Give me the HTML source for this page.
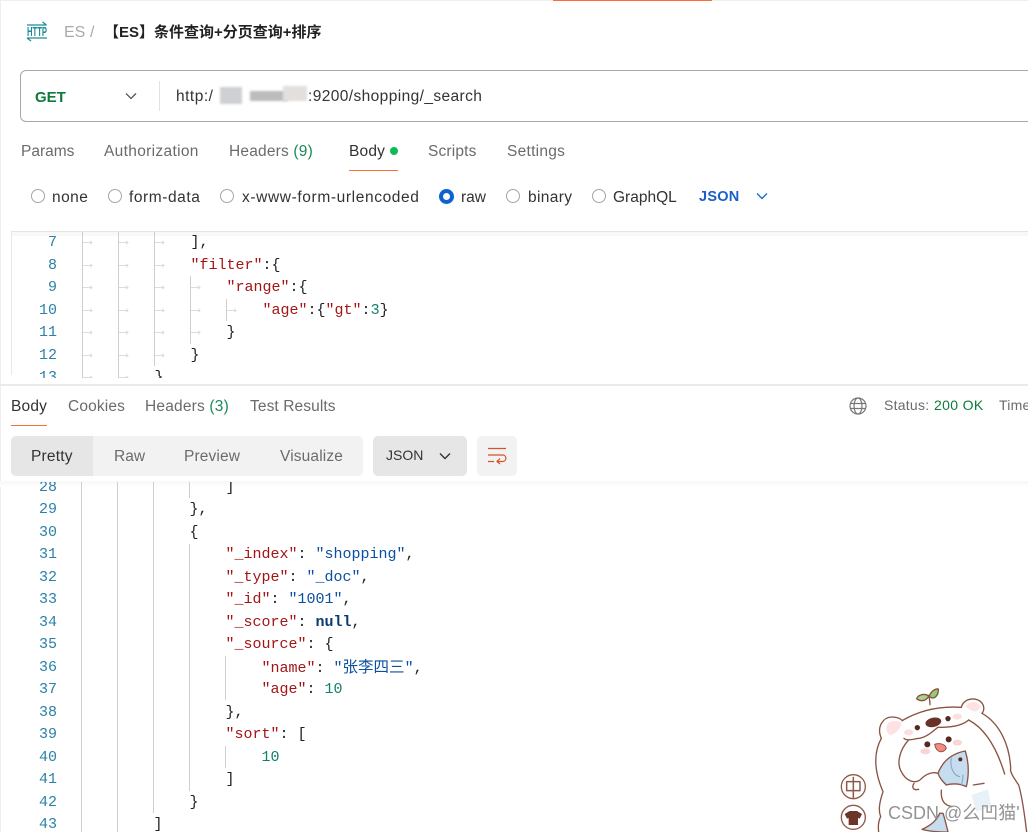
<!DOCTYPE html>
<html lang="zh">
<head>
<meta charset="utf-8">
<style>
html,body{margin:0;padding:0;background:#fff;}
body{width:1028px;height:832px;position:relative;overflow:hidden;font-family:"Liberation Sans","Noto Sans CJK SC",sans-serif;}
.t{position:absolute;white-space:pre;line-height:20px;font-size:15.5px;color:#6b6b6b;}
.r{position:absolute;width:12px;height:12px;border:1.5px solid #a6a6a6;border-radius:50%;top:189px;}
.rl{top:188px;color:#333;}
.n{position:absolute;left:20px;width:37px;text-align:right;font:15px/20px "Liberation Mono",monospace;color:#2a82a8;}
.c{position:absolute;margin-left:.5px;font:15px/20px "Liberation Mono","Noto Sans CJK SC",monospace;white-space:pre;color:#222;}
.up .n,.up .c{transform:translateY(1px);}
.k{color:#a31515}.s{color:#0b4f9e}.v{color:#14806a}.b{color:#0b3a70;font-weight:bold}
.g{position:absolute;width:1px;background:#cfcfcf;}
.a{position:absolute;width:9px;height:1px;background:#dcdcdc;}
.a:after{content:"";position:absolute;right:0;top:-1px;width:2px;height:2px;border-top:1px solid #dcdcdc;border-right:1px solid #dcdcdc;transform:rotate(45deg);}
.bx{position:absolute;}
</style>
</head>
<body>
<div class="bx" style="left:0;top:0;width:1028px;height:1px;background:#efefef"></div>
<div class="bx" style="left:553px;top:0;width:159px;height:1px;background:#ff6c37"></div>
<div class="bx" style="left:0;top:0;width:1px;height:832px;background:#eee"></div>

<svg class="bx" style="left:26px;top:20px" width="22" height="22" viewBox="0 0 22 22" fill="none" stroke="#1d8a9a" stroke-width="1.2">
<path d="M1 5H20.5M16.5 2L20.5 5"/><path d="M1 18H21M5 21L1 18"/>
<text x="1" y="16" font-family="Liberation Sans" font-size="12.5" font-weight="bold" fill="#1d8a9a" stroke="none" textLength="20" lengthAdjust="spacingAndGlyphs">HTTP</text>
</svg>
<div class="t" style="left:64px;top:23px;color:#aaa;font-size:16px">ES</div>
<div class="t" style="left:90px;top:23px;color:#aaa;font-size:16px">/</div>
<div class="t" style="left:104px;top:23px;color:#222;font-weight:bold;font-size:15px">【ES】条件查询+分页查询+排序</div>

<div class="bx" style="left:20px;top:70px;width:1020px;height:50px;border:1px solid #a8a8a8;border-radius:6px"></div>
<div class="t" style="left:35px;top:88px;color:#0f7a3c;font-weight:bold;font-size:15px">GET</div>
<svg class="bx" style="left:124px;top:92px" width="14" height="9" viewBox="0 0 14 9" fill="none" stroke="#555" stroke-width="1.3"><path d="M2 1.5L7 6.5L12 1.5"/></svg>
<div class="bx" style="left:159px;top:81px;width:1px;height:30px;background:#e2e2e2"></div>
<div class="t" style="left:176px;top:87px;color:#333;letter-spacing:.5px">http:/</div>
<div class="bx" style="left:220px;top:87px;width:22px;height:17px;background:#cfd0d3;filter:blur(1px)"></div>
<div class="bx" style="left:250px;top:91px;width:38px;height:10px;background:#bdbcbc;filter:blur(1px)"></div>
<div class="bx" style="left:283px;top:86px;width:24px;height:15px;background:#e2dfdc;filter:blur(1px)"></div>
<div class="t" style="left:308px;top:87px;color:#333;letter-spacing:.4px">:9200/shopping/_search</div>

<div class="t" style="left:21px;top:142px">Params</div>
<div class="t" style="left:104px;top:142px;letter-spacing:.33px">Authorization</div>
<div class="t" style="left:229px;top:142px;letter-spacing:.19px">Headers <span style="color:#1a8a5a">(9)</span></div>
<div class="t" style="left:349px;top:142px;color:#333;letter-spacing:.2px">Body</div>
<div class="bx" style="left:390px;top:147px;width:8px;height:8px;border-radius:50%;background:#0cbb52"></div>
<div class="bx" style="left:349px;top:170px;width:49px;height:1px;background:#ff6c37"></div>
<div class="t" style="left:428px;top:142px;letter-spacing:.17px">Scripts</div>
<div class="t" style="left:507px;top:142px;letter-spacing:.27px">Settings</div>

<div class="r" style="left:31px"></div><div class="t rl" style="left:52px;letter-spacing:.45px">none</div>
<div class="r" style="left:108px"></div><div class="t rl" style="left:129px;letter-spacing:.56px">form-data</div>
<div class="r" style="left:220px"></div><div class="t rl" style="left:242px;letter-spacing:.62px">x-www-form-urlencoded</div>
<div class="r" style="left:439px;border:4px solid #0d62d0;width:7px;height:7px"></div><div class="t rl" style="left:461px">raw</div>
<div class="r" style="left:506px"></div><div class="t rl" style="left:528px;letter-spacing:.35px">binary</div>
<div class="r" style="left:592px"></div><div class="t rl" style="left:613px">GraphQL</div>
<div class="t" style="left:699px;top:187px;color:#1a5fc8;font-weight:bold;font-size:14.5px;letter-spacing:.25px">JSON</div>
<svg class="bx" style="left:755px;top:192px" width="14" height="9" viewBox="0 0 14 9" fill="none" stroke="#1a6fd0" stroke-width="1.4"><path d="M2 1.5L7 6.5L12 1.5"/></svg>

<div class="bx" style="left:11px;top:231px;width:1017px;height:1px;background:#e4e4e4"></div>
<div class="bx" style="left:11px;top:232px;width:1017px;height:4px;background:#f8f8f8"></div>
<div class="bx" style="left:11px;top:232px;width:1px;height:143px;background:#e8e8e8"></div>

<!-- upper editor -->
<div class="bx up" style="left:12px;top:232px;width:1016px;height:146px;overflow:hidden">
<div class="bx" style="left:0;top:5px;width:1016px;height:141px">
 <div class="g" style="left:70px;top:-5px;height:146px"></div>
 <div class="g" style="left:106px;top:-5px;height:146px"></div>
 <div class="g" style="left:142px;top:-5px;height:134px"></div>
 <div class="g" style="left:178px;top:39px;height:68px"></div>
 <div class="g" style="left:214px;top:62px;height:22px"></div>
 <div class="a" style="left:71px;top:5px"></div><div class="a" style="left:107px;top:5px"></div><div class="a" style="left:143px;top:5px"></div>
 <div class="a" style="left:71px;top:28px"></div><div class="a" style="left:107px;top:28px"></div><div class="a" style="left:143px;top:28px"></div>
 <div class="a" style="left:71px;top:50px"></div><div class="a" style="left:107px;top:50px"></div><div class="a" style="left:143px;top:50px"></div><div class="a" style="left:179px;top:50px"></div>
 <div class="a" style="left:71px;top:73px"></div><div class="a" style="left:107px;top:73px"></div><div class="a" style="left:143px;top:73px"></div><div class="a" style="left:179px;top:73px"></div><div class="a" style="left:215px;top:73px"></div>
 <div class="a" style="left:71px;top:95px"></div><div class="a" style="left:107px;top:95px"></div><div class="a" style="left:143px;top:95px"></div><div class="a" style="left:179px;top:95px"></div>
 <div class="a" style="left:71px;top:118px"></div><div class="a" style="left:107px;top:118px"></div><div class="a" style="left:143px;top:118px"></div>
 <div class="a" style="left:71px;top:140px"></div><div class="a" style="left:107px;top:140px"></div>
 <div class="n" style="top:-5px;left:8px">7</div><div class="c" style="left:178px;top:-5px">],</div>
 <div class="n" style="top:18px;left:8px">8</div><div class="c" style="left:178px;top:18px"><span class="k">"filter"</span>:{</div>
 <div class="n" style="top:40px;left:8px">9</div><div class="c" style="left:214px;top:40px"><span class="k">"range"</span>:{</div>
 <div class="n" style="top:63px;left:8px">10</div><div class="c" style="left:250px;top:63px"><span class="k">"age"</span>:{<span class="k">"gt"</span>:<span class="v">3</span>}</div>
 <div class="n" style="top:85px;left:8px">11</div><div class="c" style="left:214px;top:85px">}</div>
 <div class="n" style="top:108px;left:8px">12</div><div class="c" style="left:178px;top:108px">}</div>
 <div class="n" style="top:130px;left:8px">13</div><div class="c" style="left:142px;top:130px">}</div>
</div>
</div>

<div class="bx" style="left:0;top:384px;width:1028px;height:2px;background:#ebebeb"></div>

<div class="t" style="left:11px;top:397px;color:#333;letter-spacing:.2px">Body</div>
<div class="bx" style="left:11px;top:425px;width:36px;height:1px;background:#ff6c37"></div>
<div class="t" style="left:68px;top:397px;letter-spacing:.14px">Cookies</div>
<div class="t" style="left:145px;top:397px;letter-spacing:.19px">Headers <span style="color:#1a8a5a">(3)</span></div>
<div class="t" style="left:250px;top:397px;letter-spacing:.1px">Test Results</div>

<svg class="bx" style="left:849px;top:397px" width="18" height="18" viewBox="0 0 18 18" fill="none" stroke="#777" stroke-width="1.2"><circle cx="9" cy="9" r="8"/><ellipse cx="9" cy="9" rx="4" ry="8"/><path d="M1.5 6.5H16.5M1.5 11.5H16.5"/></svg>
<div class="t" style="left:884px;top:395px;font-size:14px;letter-spacing:.25px">Status:</div>
<div class="t" style="left:934px;top:395px;font-size:14px;color:#0f7a3c;letter-spacing:.35px">200 OK</div>
<div class="t" style="left:999px;top:395px;font-size:14px;letter-spacing:.25px">Time</div>

<div class="bx" style="left:11px;top:436px;width:352px;height:40px;background:#f2f2f2;border-radius:5px"></div>
<div class="bx" style="left:11px;top:436px;width:82px;height:40px;background:#e6e6e6;border-radius:5px 0 0 5px"></div>
<div class="t" style="left:31px;top:447px;color:#333;letter-spacing:.2px">Pretty</div>
<div class="t" style="left:114px;top:447px">Raw</div>
<div class="t" style="left:184px;top:447px;letter-spacing:.14px">Preview</div>
<div class="t" style="left:280px;top:447px;letter-spacing:.14px">Visualize</div>
<div class="bx" style="left:373px;top:436px;width:94px;height:40px;background:#e6e6e6;border-radius:5px"></div>
<div class="t" style="left:386px;top:445px;color:#333;font-size:14px">JSON</div>
<svg class="bx" style="left:438px;top:452px" width="14" height="9" viewBox="0 0 14 9" fill="none" stroke="#333" stroke-width="1.4"><path d="M2 1.5L7 6.5L12 1.5"/></svg>
<div class="bx" style="left:477px;top:436px;width:40px;height:40px;background:#f2f2f2;border-radius:5px"></div>
<svg class="bx" style="left:487px;top:447px" width="20" height="18" viewBox="0 0 20 18" fill="none" stroke="#d9502a" stroke-width="1.2"><path d="M1 1.5H19M1 8H15.5C20 8 20 14.5 15.5 14.5H10M13 11.5L10 14.5L13 17M1 14.5H7"/></svg>

<div class="bx" style="left:0;top:481px;width:1028px;height:6px;background:linear-gradient(#f7f7f7,#fff)"></div>

<!-- lower editor -->
<div class="bx" style="left:0;top:482px;width:1028px;height:350px;overflow:hidden">
<div class="bx" style="left:0;top:2px;width:1028px;height:348px">
 <div class="g" style="left:81px;top:-2px;height:350px"></div>
 <div class="g" style="left:117px;top:-2px;height:350px"></div>
 <div class="g" style="left:153px;top:-2px;height:331px"></div>
 <div class="g" style="left:189px;top:-2px;height:16px"></div>
 <div class="g" style="left:189px;top:60px;height:247px"></div>
 <div class="g" style="left:225px;top:172px;height:44px"></div>
 <div class="g" style="left:225px;top:262px;height:22px"></div>
 <div class="n" style="top:-6px">28</div><div class="c" style="left:225px;top:-6px">]</div>
 <div class="n" style="top:16px">29</div><div class="c" style="left:189px;top:16px">},</div>
 <div class="n" style="top:39px">30</div><div class="c" style="left:189px;top:39px">{</div>
 <div class="n" style="top:61px">31</div><div class="c" style="left:225px;top:61px"><span class="k">"_index"</span>: <span class="s">"shopping"</span>,</div>
 <div class="n" style="top:84px">32</div><div class="c" style="left:225px;top:84px"><span class="k">"_type"</span>: <span class="s">"_doc"</span>,</div>
 <div class="n" style="top:106px">33</div><div class="c" style="left:225px;top:106px"><span class="k">"_id"</span>: <span class="s">"1001"</span>,</div>
 <div class="n" style="top:129px">34</div><div class="c" style="left:225px;top:129px"><span class="k">"_score"</span>: <span class="b">null</span>,</div>
 <div class="n" style="top:151px">35</div><div class="c" style="left:225px;top:151px"><span class="k">"_source"</span>: {</div>
 <div class="n" style="top:174px">36</div><div class="c" style="left:261px;top:174px"><span class="k">"name"</span>: <span class="s">"<span style="font-size:15.5px">张李四三</span>"</span>,</div>
 <div class="n" style="top:196px">37</div><div class="c" style="left:261px;top:196px"><span class="k">"age"</span>: <span class="v">10</span></div>
 <div class="n" style="top:219px">38</div><div class="c" style="left:225px;top:219px">},</div>
 <div class="n" style="top:241px">39</div><div class="c" style="left:225px;top:241px"><span class="k">"sort"</span>: [</div>
 <div class="n" style="top:264px">40</div><div class="c" style="left:261px;top:264px"><span class="v">10</span></div>
 <div class="n" style="top:286px">41</div><div class="c" style="left:225px;top:286px">]</div>
 <div class="n" style="top:309px">42</div><div class="c" style="left:189px;top:309px">}</div>
 <div class="n" style="top:331px">43</div><div class="c" style="left:153px;top:331px">]</div>
</div>
</div>

<!-- mascot -->
<svg class="bx" style="left:828px;top:670px;filter:blur(.35px)" width="200" height="162" viewBox="0 0 600 486" fill="none" stroke-linecap="round" stroke-linejoin="round">
 <path d="M150 486C165 430 165 390 165 365C140 320 130 255 160 205C215 135 300 112 400 112L465 130C520 165 545 225 548 295C580 345 590 420 596 486Z" fill="#fff"/>
 <g stroke="#8a5343" stroke-width="4">
  <path d="M160 205C145 170 165 140 195 141C208 142 218 146 224 152" fill="#fff"/>
  <path d="M400 112C405 90 430 82 450 90C468 98 472 118 462 130" fill="#fff"/>
  <path d="M222 152C280 118 340 108 400 112"/>
  <path d="M462 130C515 160 545 225 548 295C545 305 555 320 572 345C585 390 590 440 596 486"/>
  <path d="M160 205C138 245 135 295 165 365C155 395 150 420 158 440C150 455 150 470 152 486"/>
  <path d="M228 205C240 215 262 205 275 205C300 200 318 180 330 172C360 172 400 170 422 150"/>
  <path d="M422 150C470 175 505 230 530 312"/>
  <path d="M240 212C215 240 205 280 220 305C235 335 262 342 278 328C295 310 315 305 330 310"/>
  <path d="M258 340C250 352 256 362 272 358M340 360C338 392 348 405 372 410"/>
  <path d="M306 104C306 92 304 84 302 76"/>
  <path d="M436 345L468 340"/>
 </g>
 <path d="M182 158C170 172 175 190 188 196C204 190 220 175 220 158C210 152 192 152 182 158Z" fill="#fde1e3"/>
 <path d="M413 108C425 92 450 92 458 110C452 122 440 128 432 122C424 118 416 114 413 108Z" fill="#fde1e3"/>
 <path d="M302 78C292 70 272 72 266 86C280 97 296 92 302 78Z" fill="#a8d48a" stroke="#8a5343" stroke-width="4"/>
 <path d="M304 80C306 66 320 56 331 57C332 72 322 92 304 80Z" fill="#8fcf6f" stroke="#8a5343" stroke-width="4"/>
 <ellipse cx="316" cy="157" rx="24" ry="14" fill="#6a3226" transform="rotate(-12 316 157)"/>
 <circle cx="268" cy="173" r="8" fill="#55291f"/>
 <circle cx="360" cy="146" r="8" fill="#55291f"/>
 <ellipse cx="242" cy="187" rx="14" ry="9" fill="#fbdfe0"/>
 <ellipse cx="388" cy="140" rx="14" ry="9" fill="#fbdfe0"/>
 <circle cx="298" cy="223" r="9" fill="#55291f"/>
 <circle cx="362" cy="208" r="9" fill="#55291f"/>
 <path d="M320 223C325 250 345 250 355 235C352 222 335 218 320 223Z" fill="#f58a80" stroke="#8a5343" stroke-width="3"/>
 <ellipse cx="292" cy="244" rx="15" ry="9" fill="#fbd5d5"/>
 <ellipse cx="388" cy="218" rx="14" ry="9" fill="#fbd5d5"/>
 <path d="M330 310C345 270 375 250 412 243C425 285 422 320 415 350C395 340 370 340 355 345C345 335 335 325 330 310Z" fill="#c6dcef" stroke="#8a5343" stroke-width="4"/>
 <circle cx="397" cy="268" r="6" fill="#55291f"/>
 <path d="M370 265C365 290 375 315 395 320M405 315C405 325 403 335 400 345" stroke="#7ea5c5" stroke-width="3"/>
 <path d="M335 430C325 455 300 470 282 478C310 486 340 486 360 486C355 465 350 445 345 430Z" fill="#c6dcef" stroke="#8a5343" stroke-width="4"/>
 <path d="M430 375L480 358L490 410L445 425Z" fill="#e9f1f8"/>
 <circle cx="76" cy="350" r="36" fill="#fff" stroke="#8f5a4a" stroke-width="4"/>
 <circle cx="76" cy="442" r="36" fill="#fff" stroke="#8f5a4a" stroke-width="4"/>
 <path d="M56 335H96V362H56ZM76 322V382" stroke="#8f5a4a" stroke-width="4.5"/>
 <path d="M50 432L65 423H87L102 432L95 446L90 444V465H62V444L57 446Z" fill="#6b3528"/>
</svg>
<div class="t" style="left:888px;top:803px;color:#8e8e8e;font-size:18px;opacity:.95">CSDN @么凹猫'</div>
</body>
</html>
